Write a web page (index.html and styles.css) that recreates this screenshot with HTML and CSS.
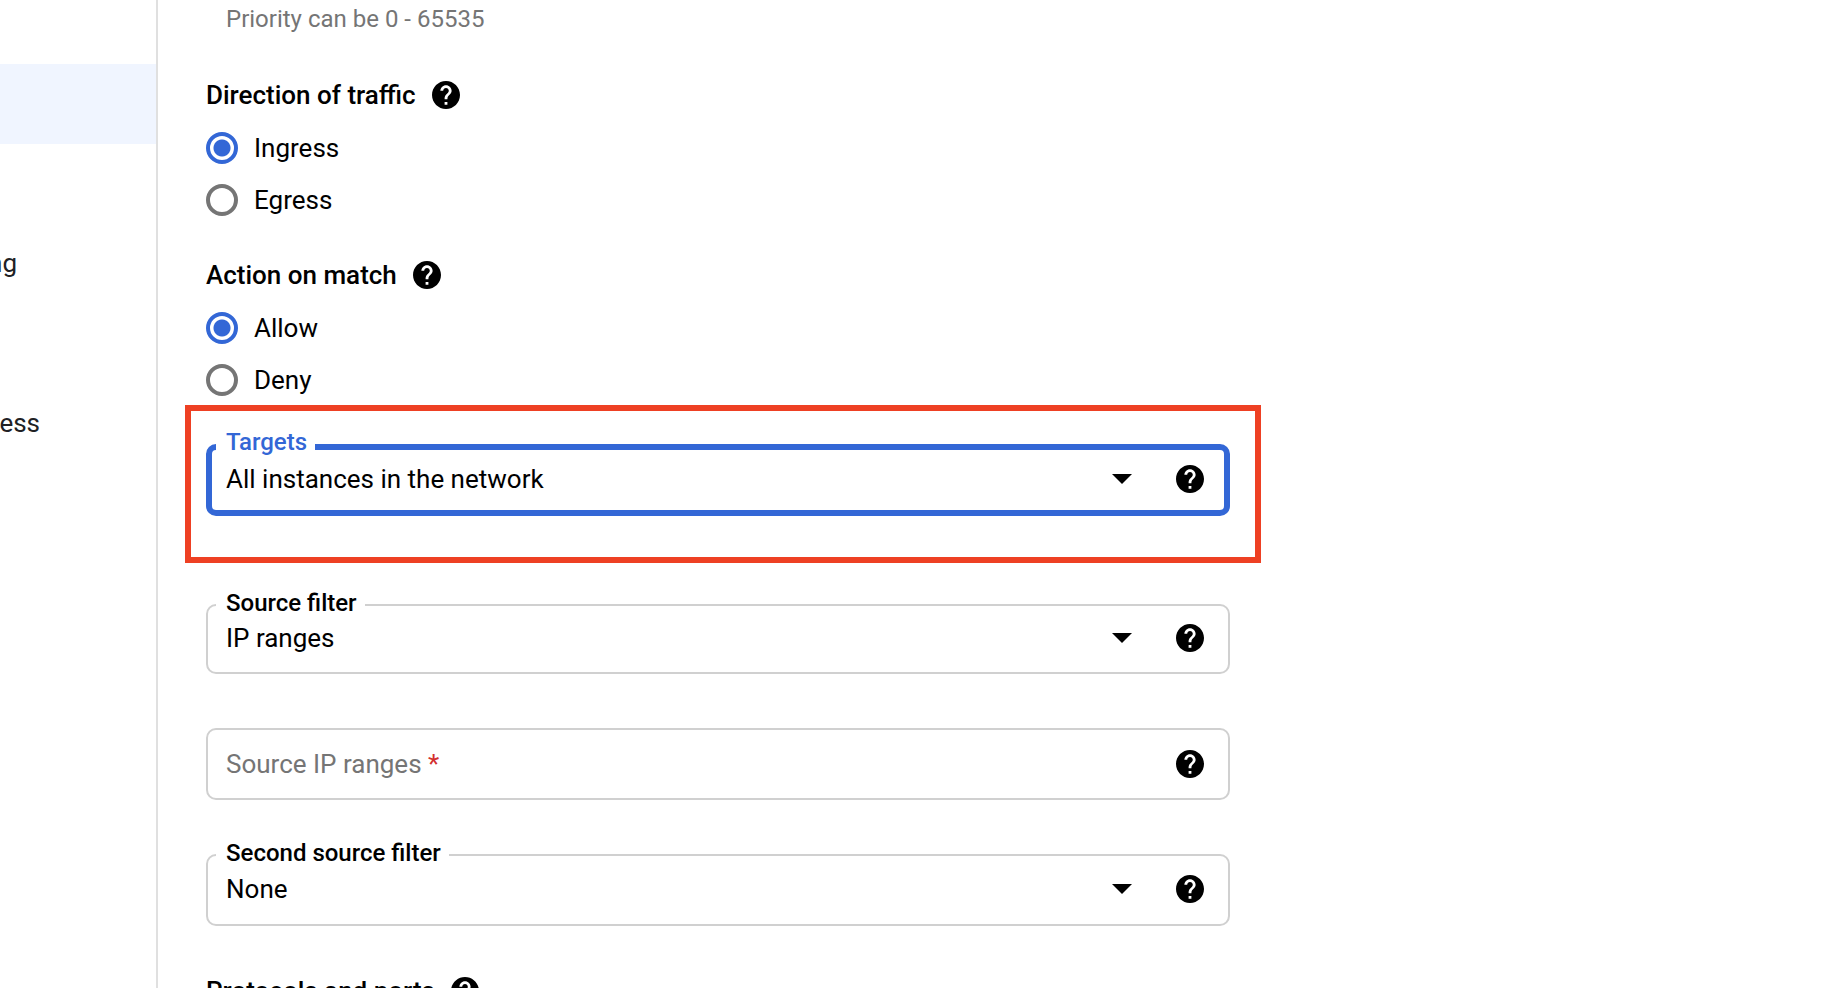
FILE: index.html
```html
<!DOCTYPE html>
<html lang="en">
<head>
	<title>Create a firewall rule</title>
	<meta charset="UTF-8">
	<meta name="viewport" content="width=device-width, initial-scale=1">
	<link rel="stylesheet" href="styles.css">
</head>
<body>
	<svg class="sprite" aria-hidden="true">
		<symbol id="help" viewBox="2 2 20 20">
			<path d="M12 2C6.48 2 2 6.48 2 12s4.48 10 10 10 10-4.48 10-10S17.52 2 12 2zm1 17h-2v-2h2v2zm2.07-7.75l-.9.92C13.45 12.9 13 13.5 13 15h-2v-.5c0-1.1.45-2.1 1.17-2.83l1.24-1.26c.37-.36.59-.86.59-1.41 0-1.1-.9-2-2-2s-2 .9-2 2H8c0-2.21 1.79-4 4-4s4 1.79 4 4c0 .88-.36 1.68-.93 2.25z"/>
		</symbol>
		<symbol id="arrow" viewBox="0 0 20 10">
			<path d="M0 0h20L10 10z"/>
		</symbol>
	</svg>

	<nav class="sidebar">
		<a href="#" class="nav-item active" aria-label="Firewall"></a>
		<a href="#" class="nav-item" aria-label="Routes"></a>
		<a href="#" class="nav-item"><span class="nav-text">ng</span></a>
		<a href="#" class="nav-item" aria-label="Connector"></a>
		<a href="#" class="nav-item"><span class="nav-text wide">ess</span></a>
	</nav>

	<main class="content">
		<form class="rule-form">
			<p class="hint">Priority can be 0 - 65535</p>

			<div class="group" role="radiogroup" aria-labelledby="direction">
				<div class="heading">
					<h2 id="direction">Direction of traffic</h2>
					<button type="button" class="help" aria-label="Help"><svg><use href="#help"/></svg></button>
				</div>
				<label class="radio"><input type="radio" name="direction" checked>Ingress</label>
				<label class="radio"><input type="radio" name="direction">Egress</label>
			</div>

			<div class="group" role="radiogroup" aria-labelledby="action">
				<div class="heading">
					<h2 id="action">Action on match</h2>
					<button type="button" class="help" aria-label="Help"><svg><use href="#help"/></svg></button>
				</div>
				<label class="radio"><input type="radio" name="action" checked>Allow</label>
				<label class="radio"><input type="radio" name="action">Deny</label>
			</div>

			<div class="field dropdown focused">
				<label class="float" for="targets">Targets</label>
				<select id="targets">
					<option>All instances in the network</option>
				</select>
				<svg class="arrow"><use href="#arrow"/></svg>
				<button type="button" class="help" aria-label="Help"><svg><use href="#help"/></svg></button>
				<div class="marker"></div>
			</div>

			<div class="field dropdown source">
				<label class="float" for="filter">Source filter</label>
				<select id="filter">
					<option>IP ranges</option>
				</select>
				<svg class="arrow"><use href="#arrow"/></svg>
				<button type="button" class="help" aria-label="Help"><svg><use href="#help"/></svg></button>
			</div>

			<div class="field">
				<label class="inside" for="ranges">Source IP ranges <span class="required">*</span></label>
				<input type="text" id="ranges">
				<button type="button" class="help" aria-label="Help"><svg><use href="#help"/></svg></button>
			</div>

			<div class="field dropdown last">
				<label class="float" for="second">Second source filter</label>
				<select id="second">
					<option>None</option>
				</select>
				<svg class="arrow"><use href="#arrow"/></svg>
				<button type="button" class="help" aria-label="Help"><svg><use href="#help"/></svg></button>
			</div>

			<div class="heading">
				<h2>Protocols and ports</h2>
				<button type="button" class="help" aria-label="Help"><svg><use href="#help"/></svg></button>
			</div>
		</form>
	</main>
</body>
</html>
```
FILE: styles.css
```css
* {
	box-sizing: border-box;
}
body {
	margin: 0;
	height: 100vh;
	overflow: hidden;
	display: flex;
	background: #fff;
	color: #000;
	font-family: Roboto, "Liberation Sans", sans-serif;
	font-size: 26px;
	line-height: 32px;
}
.sprite {
	position: absolute;
	width: 0;
	height: 0;
}

/* left menu */
.sidebar {
	flex: none;
	width: 158px;
	padding-top: 64px;
	border-right: 2px solid #e0e0e0;
}
.nav-item {
	display: flex;
	align-items: center;
	height: 80px;
	padding-bottom: 2px;
	color: #202124;
	text-decoration: none;
}
.nav-item.active {
	background: #f0f5ff;
}
.nav-text {
	display: flex;
	justify-content: flex-end;
	width: 17px;
}
.nav-text.wide {
	width: 40px;
}

/* form */
.content {
	flex: 1;
	padding: 3px 48px 0;
}
.rule-form {
	max-width: 1024px;
}
.hint {
	margin: 0 0 42px 20px;
	color: #757575;
	font-size: 24px;
}
.group {
	margin-bottom: 31px;
}
.heading {
	display: flex;
	align-items: center;
	gap: 16px;
	height: 36px;
	margin-bottom: 9px;
}
h2 {
	margin: 0;
	font-size: 26px;
	font-weight: 500;
}
.help {
	flex: none;
	width: 28px;
	height: 28px;
	padding: 0;
	border: none;
	background: none;
	cursor: pointer;
}
.help svg {
	display: block;
	width: 28px;
	height: 28px;
}
.radio {
	display: flex;
	align-items: center;
	gap: 16px;
	height: 52px;
}
.radio input {
	appearance: none;
	width: 32px;
	height: 32px;
	margin: 0;
	border: 4px solid #757575;
	border-radius: 50%;
}
.radio input:checked {
	border-color: #3367d6;
	background: radial-gradient(circle, #3367d6 8px, #fff 9px);
}

.field {
	position: relative;
	display: flex;
	align-items: center;
	height: 72px;
	margin-bottom: 54px;
	padding: 0 24px 0 18px;
	border: 2px solid #d0d0d0;
	border-radius: 10px;
}
.field.dropdown {
	padding-bottom: 3px;
}
.field select,
.field input {
	appearance: none;
	flex: 1;
	min-width: 0;
	height: 100%;
	padding: 0;
	border: none;
	outline: none;
	background: none;
	color: #000;
	font: inherit;
}
.arrow {
	flex: none;
	width: 20px;
	height: 10px;
	margin-right: 44px;
	pointer-events: none;
}
.float {
	position: absolute;
	top: -19px;
	left: 8px;
	padding: 0 8px 0 10px;
	background: #fff;
	font-size: 24px;
	font-weight: 500;
}
.inside {
	color: #757575;
}
.required {
	color: #d32f2f;
}
.field.focused {
	margin: 38px 0 88px;
	padding: 0 20px 3px 14px;
	border: 6px solid #3367d6;
}
.focused .float {
	top: -24px;
	left: 4px;
	color: #3367d6;
}
.field.source {
	height: 70px;
}
.field.last {
	margin-bottom: 47px;
}
.marker {
	position: absolute;
	inset: -45px -37px -53px -27px;
	border: 6px solid #ee4023;
	pointer-events: none;
}
```
